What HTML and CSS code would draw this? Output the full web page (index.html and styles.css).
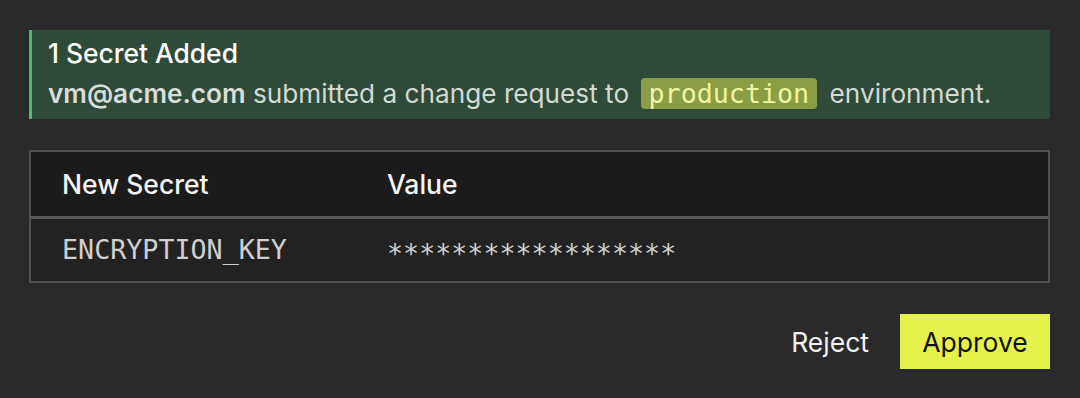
FILE: index.html
```html
<!DOCTYPE html>
<html>
<head>
<meta charset="utf-8">
<link rel="stylesheet" href="styles.css">
</head>
<body>
<div class="panel">
  <div class="banner">
    <div class="banner-title">1 Secret Added</div>
    <div class="banner-text"><span class="user">vm@acme.com</span> submitted a change request to <code class="env">production</code> environment.</div>
  </div>
  <div class="table">
    <div class="row head">
      <div class="cell c1">New Secret</div>
      <div class="cell c2">Value</div>
    </div>
    <div class="row body">
      <div class="cell c1 mono">ENCRYPTION_KEY</div>
      <div class="cell c2 mono masked">******************</div>
    </div>
  </div>
  <div class="actions">
    <button class="btn reject">Reject</button>
    <button class="btn approve">Approve</button>
  </div>
</div>
</body>
</html>
```

FILE: styles.css
```css
html, body {
  margin: 0;
  padding: 0;
  background: #2a2a2a;
  width: 1080px;
  height: 398px;
  overflow: hidden;
}
body {
  font-family: Inter, "Liberation Sans", Arial, sans-serif;
  color: #f2f2f2;
}
.panel {
  padding: 30px 30px 0 29px;
  display: flex;
  flex-direction: column;
}
.banner {
  background: #2f4a39;
  border-left: 3px solid #3ec46d;
  height: 89px;
  box-sizing: border-box;
  padding: 8px 0 0 16px;
}
.banner-title {
  font-size: 26.4px;
  font-weight: 500;
  color: #ffffff;
  line-height: 30px;
}
.banner-text {
  font-size: 26.2px;
  color: #d3dad4;
  line-height: 30px;
  margin-top: 11px;
}
.user {
  font-weight: 600;
  color: #d9ddd9;
}
.env {
  font-family: "DejaVu Sans Mono", "Liberation Mono", monospace;
  font-size: 26.7px;
  line-height: 0;
  background: #8a9d45;
  color: #eff5a2;
  border-radius: 4px;
  padding: 0 8px;
  margin: 0 5px 0 4px;
}
.table {
  margin-top: 31px;
  border: 2px solid #515151;
  display: flex;
  flex-direction: column;
}
.row {
  display: flex;
  align-items: center;
}
.row.head {
  background: #1b1b1b;
  height: 64px;
  border-bottom: 3px solid #595959;
}
.row.body {
  background: #222222;
  height: 62px;
}
.cell {
  font-size: 26.5px;
  line-height: 30px;
}
.c1 {
  width: 356px;
  box-sizing: border-box;
  padding-left: 31px;
}
.head .cell {
  color: #f5f5f5;
  font-weight: 500;
}
.mono {
  font-family: "DejaVu Sans Mono", "Liberation Mono", monospace;
  font-size: 26.7px;
  color: #cfcfcf;
}
.masked {
  padding-top: 7px;
}
.actions {
  display: flex;
  justify-content: flex-end;
  align-items: center;
  margin-top: 31px;
  gap: 31px;
}
.btn {
  font-family: Inter, "Liberation Sans", Arial, sans-serif;
  font-size: 26.5px;
  border: none;
  cursor: pointer;
}
.reject {
  background: transparent;
  color: #f2f2f2;
  padding: 0;
}
.approve {
  background: #e4f24b;
  color: #111111;
  width: 150px;
  height: 55px;
  padding: 0;
}
```
